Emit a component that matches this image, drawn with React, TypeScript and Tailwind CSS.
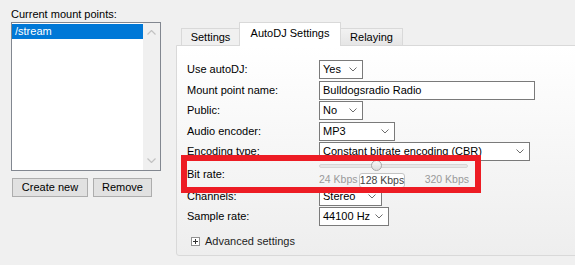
import React from 'react';

const Chevron = ({ color = '#6d6d6d' }: { color?: string }) => (
  <svg width="8" height="5" viewBox="0 0 8 5" className="shrink-0">
    <polyline points="0.5,0.5 4,4 7.5,0.5" fill="none" stroke={color} strokeWidth="1" />
  </svg>
);

const Select = ({ value, width }: { value: string; width: string }) => (
  <div className={`flex h-[19px] ${width} items-center justify-between border border-[#7a7a7a] bg-white pl-[3px] pr-[5px]`}>
    <span>{value}</span>
    <Chevron />
  </div>
);

const Row = ({ label, h, children }: { label: string; h: string; children: React.ReactNode }) => (
  <div className={`flex ${h} items-center`}>
    <div className="w-[132px] shrink-0">{label}</div>
    {children}
  </div>
);

export default function App() {
  return (
    <div className="relative flex h-[265px] w-[575px] overflow-hidden bg-[#f0f0f0] font-['Liberation_Sans',Arial,sans-serif] text-[11px] leading-[15px] text-black">
      {/* mount points list */}
      <div className="w-[176px] shrink-0 pl-[11px] pt-[7px]">
        <div className="h-[15px]">Current mount points:</div>
        <div className="flex h-[149px] w-[150px] border border-[#828790] bg-white">
          <div className="flex-1 pt-px">
            <div className="h-[15px] bg-[#0078d7] pl-[3px] text-white">/stream</div>
          </div>
          <div className="flex w-[17px] flex-col items-center justify-between bg-[#f0f0f0] py-[7px]">
            <svg width="9" height="5" viewBox="0 0 9 5">
              <polyline points="0.5,4.5 4.5,0.5 8.5,4.5" fill="none" stroke="#c2c2c2" strokeWidth="1.2" />
            </svg>
            <svg width="9" height="5" viewBox="0 0 9 5">
              <polyline points="0.5,0.5 4.5,4.5 8.5,0.5" fill="none" stroke="#c2c2c2" strokeWidth="1.2" />
            </svg>
          </div>
        </div>
        <div className="mt-[7px] flex gap-[5px] pl-px">
          <button className="h-[19px] w-[76px] border border-[#adadad] bg-[#e1e1e1]">Create new</button>
          <button className="h-[19px] w-[59px] border border-[#adadad] bg-[#e1e1e1]">Remove</button>
        </div>
      </div>

      {/* tab control */}
      <div className="flex flex-col">
        <div className="flex h-[45px] items-end pl-[5px]">
          <div className="flex h-[17px] w-[59px] items-center justify-center border border-b-0 border-[#d9d9d9] bg-[#f0f0f0]">Settings</div>
          <div className="relative z-10 -mb-px -ml-px flex h-[24px] w-[102px] items-center justify-center border border-b-0 border-[#d9d9d9] bg-white pb-[2px]">AutoDJ Settings</div>
          <div className="-ml-px flex h-[17px] w-[63px] items-center justify-center border border-b-0 border-[#d9d9d9] bg-linear-to-b from-[#f2f2f2] to-[#e6e6e6]">Relaying</div>
        </div>
        <div className="h-[211px] w-[405px] rounded-bl-[3px] border border-[#d9d9d9] bg-linear-to-b from-white to-[#eeeeee] pl-[10px] pt-[13px]">
          <Row label="Use autoDJ:" h="h-[21px]">
            <Select value="Yes" width="w-[44px]" />
          </Row>
          <Row label="Mount point name:" h="h-[20px]">
            <div className="flex h-[19px] w-[216px] items-center border border-[#7a7a7a] bg-white pl-[3px]">Bulldogsradio Radio</div>
          </Row>
          <Row label="Public:" h="h-[21px]">
            <Select value="No" width="w-[44px]" />
          </Row>
          <Row label="Audio encoder:" h="h-[20px]">
            <Select value="MP3" width="w-[76px]" />
          </Row>
          <Row label="Encoding type:" h="h-[20px]">
            <Select value="Constant bitrate encoding (CBR)" width="w-[211px]" />
          </Row>
          <Row label="Bit rate:" h="h-[26px]">
            <div className="relative h-full w-[150px] pt-[3px]">
              <div className="h-[4px] w-[149px] rounded-[2px] border border-[#d6d6d6] bg-[#e7e7e7]" />
              <div className="absolute left-[52px] top-[-1px] h-[11px] w-[11px] rounded-full border border-[#a7a7a7] bg-linear-to-b from-[#f7f7f7] to-[#dcdcdc]" />
              <div className="mt-[4px] flex w-[150px] justify-between text-[10.5px] text-[#9a9a9a]">
                <span>24 Kbps</span>
                <span>320 Kbps</span>
              </div>
            </div>
          </Row>
          <Row label="Channels:" h="h-[19px]">
            <Select value="Stereo" width="w-[63px]" />
          </Row>
          <Row label="Sample rate:" h="h-[21px]">
            <Select value="44100 Hz" width="w-[70px]" />
          </Row>
          <div className="mt-[7px] flex h-[15px] items-center pl-[4px]">
            <svg width="9" height="9" viewBox="0 0 9 9" className="mr-[5px]">
              <rect x="0.5" y="0.5" width="8" height="8" fill="#fff" stroke="#919191" />
              <line x1="2" y1="4.5" x2="7" y2="4.5" stroke="#333" />
              <line x1="4.5" y1="2" x2="4.5" y2="7" stroke="#333" />
            </svg>
            <span className="text-[#1e1e1e]">Advanced settings</span>
          </div>
        </div>
      </div>

      {/* slider value tooltip */}
      <div className="absolute left-[359px] top-[173px] z-20 flex h-[15px] w-[46px] items-center justify-center whitespace-nowrap rounded-[3px] border border-[#c4c4c4] bg-white text-[10.5px] text-[#444]">
        128 Kbps
      </div>

      {/* red highlight annotation */}
      <div className="absolute left-[181px] top-[155px] z-30 h-[38px] w-[300px] border-[6px] border-[#ed1c24]" />
    </div>
  );
}
